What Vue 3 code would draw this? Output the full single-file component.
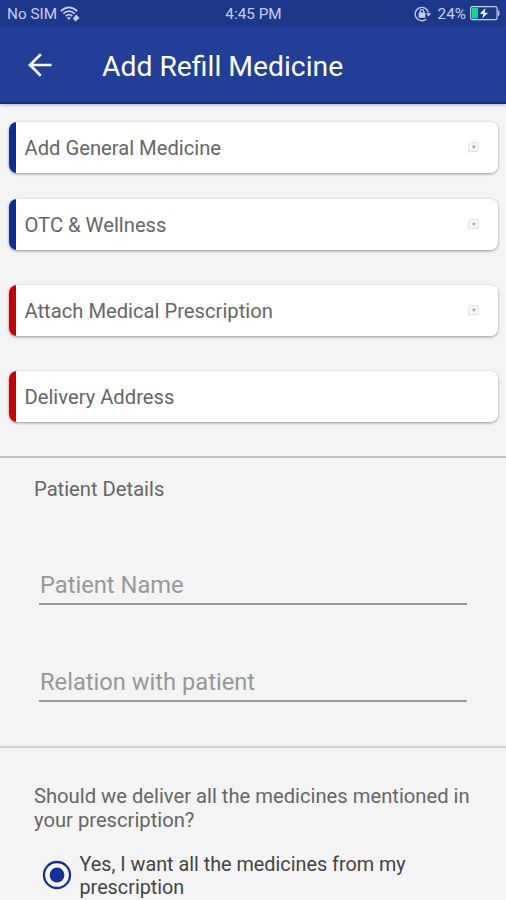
<script setup>
const actions = [
  { label: 'Add General Medicine', tone: 'blue', add: true },
  { label: 'OTC & Wellness', tone: 'blue', add: true },
  { label: 'Attach Medical Prescription', tone: 'red', add: true },
  { label: 'Delivery Address', tone: 'red', add: false },
]
const fields = ['Patient Name', 'Relation with patient']
</script>

<template>
  <div class="screen">
    <div class="status">
      <div class="side">
        <span class="sim">No SIM</span>
        <svg class="wifi" width="20" height="16" viewBox="0 0 20 16" fill="none" stroke="currentColor">
          <path d="M.8 5.2Q9 -2.4 17.2 5.2" stroke-width="1.8" />
          <path d="M3.3 7.7Q9 2.6 14.7 7.7" stroke-width="1.8" />
          <path d="M5.7 10.1Q9 7.2 12.3 10.1" stroke-width="1.8" />
          <path d="M7 11.8Q9 10.3 11 11.8L9 14Z" fill="currentColor" stroke="none" />
          <path d="M16.2 8.6 19.6 12 15.6 15.6 12.8 12.4z" fill="currentColor" stroke="none" />
        </svg>
      </div>
      <span class="clock">4:45 PM</span>
      <div class="side right">
        <svg class="lock" width="18" height="16" viewBox="0 0 18 16" fill="none" stroke="currentColor">
          <path d="M12.2 13.2A6.7 6.7 0 1 1 14.4 6.5" stroke-width="1.4" />
          <path d="M11.8 7.2h5.4l-2.7 3.4z" fill="currentColor" stroke="none" />
          <rect x="4.7" y="6.6" width="6.6" height="5.2" rx=".6" fill="currentColor" stroke="none" />
          <path d="M6.2 7V5.5a1.8 1.8 0 0 1 3.6 0V7" stroke-width="1.3" />
        </svg>
        <span class="percent">24%</span>
        <svg class="battery" width="30" height="15" viewBox="0 0 30 15">
          <rect x=".7" y=".7" width="26.4" height="13" rx="1.8" fill="none" stroke="currentColor" stroke-width="1.2" />
          <rect x="2" y="2" width="6" height="10.4" fill="#10d88c" />
          <path d="M28 4.4q1.4 0 1.4 1.4v2.8q0 1.4-1.4 1.4z" fill="currentColor" />
          <path d="M15.5 2 9.8 7.8h3.6L12.3 12.6 18 6.7h-3.5z" fill="#fff" />
        </svg>
      </div>
    </div>

    <header class="bar">
      <svg class="back" width="24" height="24" viewBox="0 0 24 24" fill="none" stroke="#fff" stroke-width="2.7">
        <path d="M23.5 12H2.5M12.8 1.2 2 12l10.8 10.8" />
      </svg>
      <h1 class="title">Add Refill Medicine</h1>
    </header>

    <main class="cards">
      <div v-for="item in actions" :key="item.label" class="card" :class="item.tone">
        <span class="card-label">{{ item.label }}</span>
        <svg v-if="item.add" class="plus" width="11" height="11" viewBox="0 0 11 11">
          <path d="M2.4 .6h6.8q1.2 0 1.2 1.2v6.4q0 1.2-1.2 1.2H3.4L.6 10.4V5L1.2 1.8Q1.4.6 2.4 .6z" fill="#f8f8f8" stroke="#dcdcdc" stroke-width=".9" />
          <path d="M5.9 3.1v3.6M4.1 4.9h3.6" stroke="#999" stroke-width="1" />
        </svg>
      </div>
    </main>

    <section class="patient">
      <h2 class="section-title">Patient Details</h2>
      <input v-for="f in fields" :key="f" class="field" type="text" :placeholder="f" />
    </section>

    <section class="delivery">
      <p class="question">Should we deliver all the medicines mentioned in<br>your prescription?</p>
      <label class="option">
        <svg class="radio" width="30" height="30" viewBox="0 0 30 30">
          <circle cx="15" cy="15" r="13" fill="#fafafa" stroke="#142f98" stroke-width="2.3" />
          <circle cx="15" cy="15" r="7.4" fill="#142f98" />
        </svg>
        <span class="answer">Yes, I want all the medicines from my<br>prescription</span>
      </label>
    </section>
  </div>
</template>

<style>
body { margin: 0; background: #f4f4f4; overflow: hidden; }
</style>

<style scoped>
* { box-sizing: border-box; }
.screen {
  height: 900px;
  overflow: hidden;
  background: #f4f4f4;
  font-family: Roboto, sans-serif;
  color: #666;
}
.status {
  display: grid;
  grid-template-columns: 1fr auto 1fr;
  align-items: center;
  height: 26px;
  padding: 2px 6px 0 7px;
  background: #1c388b;
  color: #c7cfec;
  font-size: 15.3px;
  line-height: 24px;
}
.side { display: flex; align-items: center; }
.right { justify-content: flex-end; }
.wifi { margin-left: 3px; }
.percent { margin: 0 4px 0 6px; }
.lock, .battery { margin-top: -1px; }
.bar {
  display: flex;
  align-items: center;
  height: 78px;
  padding: 2px 28px 0;
  background: #213f99;
  border-bottom: 2px solid #0b2c8c;
  box-shadow: 0 1px 3px rgba(0, 0, 0, .25);
}
.title {
  margin: 4px 0 0 50px;
  color: #fff;
  font-size: 28.3px;
  font-weight: 400;
  line-height: 34px;
  white-space: nowrap;
}
.cards { padding: 18px 8px 0 9px; }
.card {
  display: flex;
  align-items: center;
  justify-content: space-between;
  height: 51px;
  margin-bottom: 35px;
  padding: 0 19px 0 15.5px;
  border-radius: 8px;
  background: linear-gradient(90deg, var(--tone) 7px, #fff 7px);
  box-shadow: 0 1px 3px rgba(0, 0, 0, .4);
}
.card:first-child { margin-bottom: 26px; }
.card:last-child { margin-bottom: 0; }
.blue { --tone: #0c2e96; }
.red { --tone: #c80006; }
.card-label { font-size: 20.2px; line-height: 24px; white-space: nowrap; }
.plus { margin-top: -1px; }
.patient {
  height: 290px;
  margin-top: 34px;
  padding: 19px 39px 0;
  border-top: 2px solid #c2c2c2;
}
.section-title {
  margin: 0 0 0 -5px;
  font-size: 20.2px;
  font-weight: 400;
  line-height: 24px;
}
.field {
  display: block;
  width: 428px;
  height: 40px;
  margin-top: 64px;
  padding: 1px 1px 0;
  border: 0;
  border-bottom: 2px solid #999;
  background: transparent;
  font: 23.7px Roboto, sans-serif;
}
.field + .field { margin-top: 57px; }
.field::placeholder { color: #989898; opacity: 1; }
.delivery { padding: 36px 34px 0; border-top: 2px solid #d2d2d2; }
.question { margin: 0; font-size: 20.2px; line-height: 24px; white-space: nowrap; }
.option {
  display: flex;
  align-items: center;
  gap: 7.5px;
  margin: 21px 0 0 8px;
  color: #444;
  font-size: 19.8px;
  line-height: 23px;
  white-space: nowrap;
}
.radio { flex: none; margin-top: -2px; }
</style>
